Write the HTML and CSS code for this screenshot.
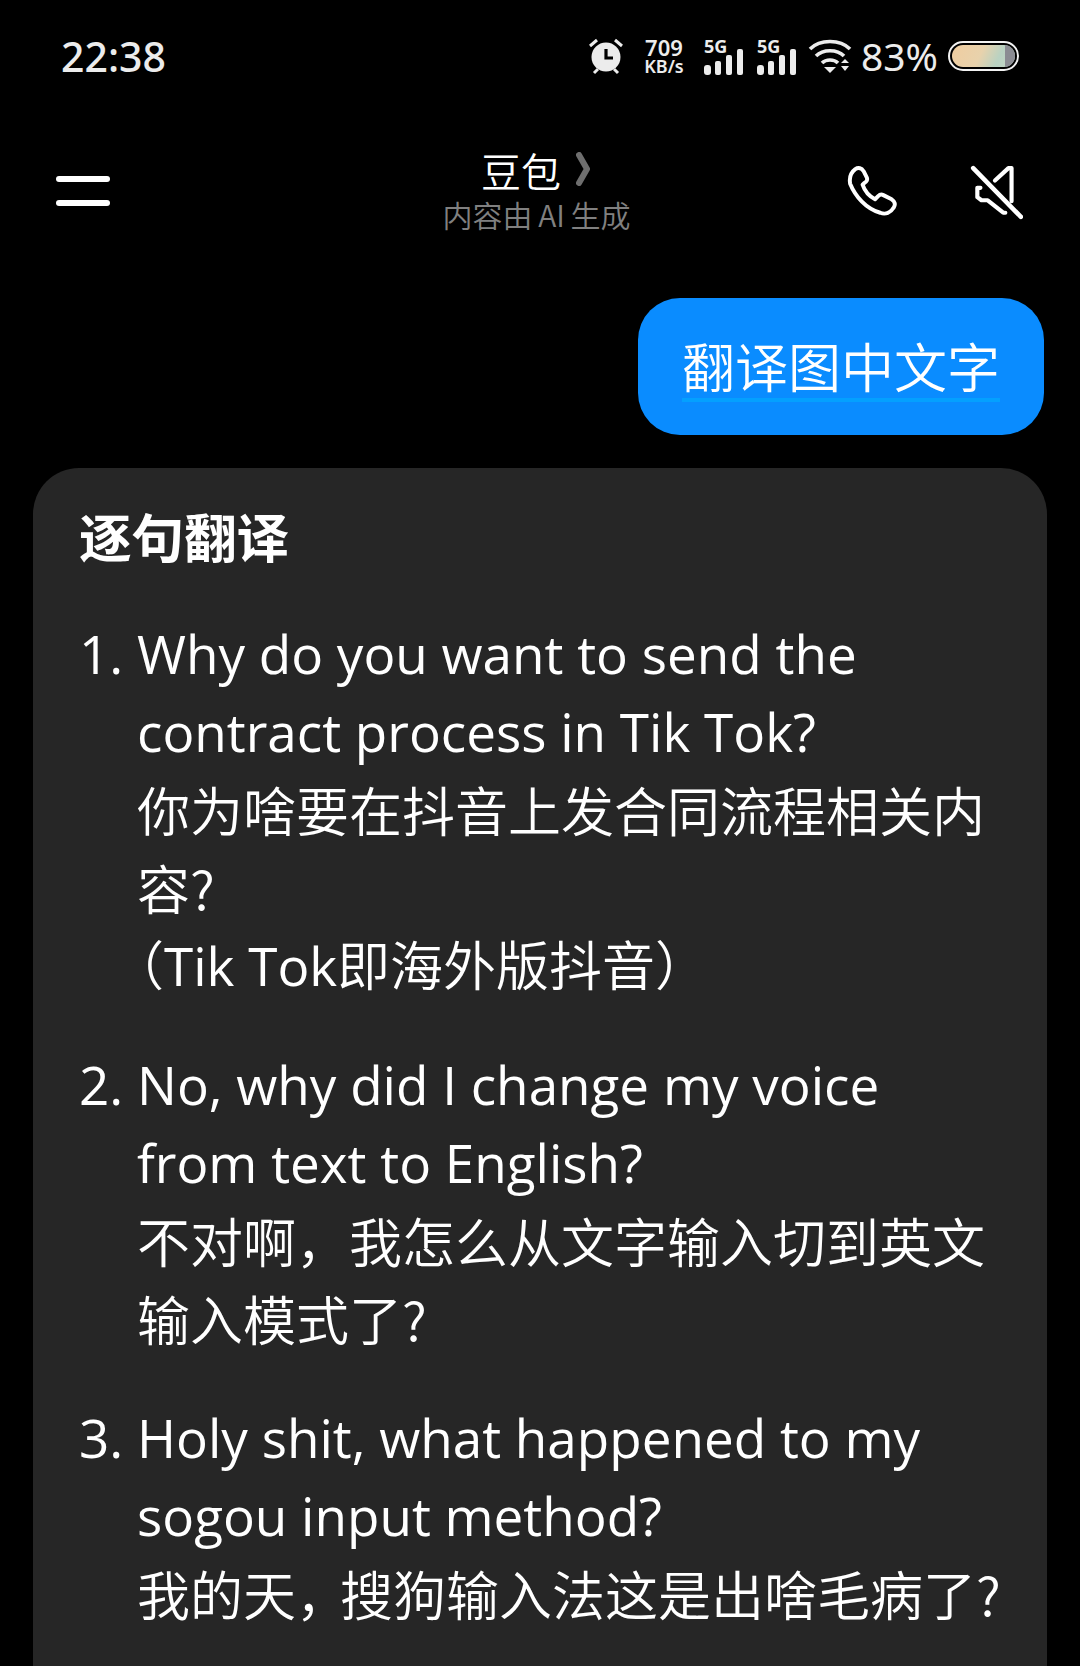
FILE: index.html
```html
<!DOCTYPE html>
<html lang="zh">
<head>
<meta charset="utf-8">
<title>豆包</title>
<link rel="stylesheet" href="styles.css">
</head>
<body>
<div class="screen">
  <div class="status">
    <span class="time">22:38</span>
    <div class="status-right">
      <svg class="alarm" width="36" height="38" viewBox="0 0 36 38"><circle cx="18" cy="20" r="14.5" fill="#ececec"/><path d="M18 12v9h7" fill="none" stroke="#000" stroke-width="3.2"/><path d="M2 9l7-6M34 9l-7-6M6 36l4-4M30 36l-4-4" stroke="#ececec" stroke-width="3" fill="none"/></svg>
      <div class="speed"><span>709</span><span>KB/s</span></div>
      <div class="sim"><span class="sim-label">5G</span><svg class="bars" width="40" height="26" viewBox="0 0 40 26"><rect x="0" y="16" width="7" height="10" rx="3" fill="#ececec"/><rect x="11" y="12" width="6" height="14" rx="2" fill="#ececec"/><rect x="22" y="6" width="6" height="20" rx="2" fill="#ececec"/><rect x="33" y="0" width="6" height="26" rx="2" fill="#ececec"/></svg></div>
      <div class="sim"><span class="sim-label">5G</span><svg class="bars" width="40" height="26" viewBox="0 0 40 26"><rect x="0" y="16" width="7" height="10" rx="3" fill="#ececec"/><rect x="11" y="12" width="6" height="14" rx="2" fill="#ececec"/><rect x="22" y="6" width="6" height="20" rx="2" fill="#ececec"/><rect x="33" y="0" width="6" height="26" rx="2" fill="#ececec"/></svg></div>
      <svg class="wifi" width="44" height="36" viewBox="0 0 44 36"><path d="M2 11C12 1 32 1 42 11M8 18C15 11 29 11 36 18M14 25C18 21 26 21 30 25" fill="none" stroke="#ececec" stroke-width="3.6"/><path d="M16 29h12l-6 6z" fill="#ececec"/><path d="M33 25l4-4 4 4zM33 28h8l-4 5z" fill="#ececec"/></svg>
      <span class="percent">83%</span>
      <div class="battery"><div class="battery-fill"></div></div>
    </div>
  </div>

  <header class="nav">
    <div class="menu"><span></span><span></span></div>
    <div class="title">
      <div class="name">豆包<svg class="chev" width="14" height="34" viewBox="0 0 14 34"><path d="M3 3l8 14-8 14" fill="none" stroke="#6e6e6e" stroke-width="6" stroke-linejoin="round" stroke-linecap="round"/></svg></div>
      <div class="sub">内容由 AI 生成</div>
    </div>
    <div class="actions">
      <svg width="54" height="54" viewBox="0 0 52 52"><path d="M8 4c3-2 6-1 8 2l3 6c1 2 0 4-2 5l-2 2c2 6 6 11 12 14l3-3c1-1 3-2 5-1l8 4c3 2 4 5 2 8-3 5-8 7-13 5C18 42 8 30 3 18 2 12 4 7 8 4z" fill="none" stroke="#fff" stroke-width="3.8" stroke-linejoin="round"/></svg>
      <svg width="54" height="56" viewBox="0 0 52 54"><path d="M4 3l46 47" stroke="#fff" stroke-width="4.4" stroke-linecap="round"/><path d="M25 15L38 3h3v32M11 22H8v9l4 3h6l15 12h2" fill="none" stroke="#fff" stroke-width="4" stroke-linejoin="round" stroke-linecap="round"/></svg>
    </div>
  </header>

  <div class="user-row">
    <div class="bubble"><span class="bubble-text">翻译图中文字</span></div>
  </div>

  <article class="card">
    <h2 class="card-title">逐句翻译</h2>
    <ol class="list">
      <li class="item"><span class="num">1.</span><div class="text"><p>Why do you want to send the contract process in Tik Tok?</p><p class="zh">你为啥要在抖音上发合同流程相关内容?</p><p><span class="zh-in open">（</span>Tik Tok<span class="zh-in">即海外版抖音）</span></p></div></li>
      <li class="item"><span class="num">2.</span><div class="text"><p>No, why did I change my voice<br>from text to English?</p><p class="zh">不对啊，我怎么从文字输入切到英文输入模式了?</p></div></li>
      <li class="item"><span class="num">3.</span><div class="text"><p>Holy shit, what happened to my sogou input method?</p><p class="zh">我的天<span class="comma">，</span>搜狗输入法这是出啥毛病了?</p></div></li>
    </ol>
  </article>
</div>
</body>
</html>
```
FILE: styles.css
```css
* { box-sizing: border-box; margin: 0; padding: 0; }
html, body { background: #000; }
body { width: 1080px; height: 1666px; overflow: hidden; font-family: "Open Sans", "Noto Sans CJK SC", sans-serif; color: #fff; }
.screen { height: 1666px; overflow: hidden; display: flex; flex-direction: column; }

.status { height: 114px; padding: 32px 61px 0 61px; display: flex; justify-content: space-between; align-items: flex-start; }
.time { font-family: "Noto Sans", sans-serif; font-size: 41px; line-height: 48px; color: #ececec; font-weight: 500; }
.status-right { display: flex; align-items: center; height: 48px; }
.alarm { margin-right: 19px; }
.speed { display: flex; flex-direction: column; font-family: "Noto Sans", sans-serif; font-weight: 600; color: #ececec; margin-right: 19px; width: 42px; align-items: center; }
.speed span:first-child { font-size: 22px; line-height: 21px; }
.speed span:last-child { font-size: 18px; line-height: 17px; white-space: nowrap; }
.sim { width: 40px; height: 38px; margin-right: 13px; position: relative; display: flex; align-items: flex-end; }
.sim-label { position: absolute; left: 0; top: -1px; font-family: "Noto Sans", sans-serif; font-weight: 700; font-size: 18px; line-height: 20px; color: #ececec; }
.wifi { margin-right: 9px; margin-left: -2px; }
.percent { font-family: "Noto Sans", sans-serif; font-size: 39px; line-height: 48px; color: #ececec; margin-right: 10px; }
.battery { width: 71px; height: 30px; border: 2px solid #f2f2f2; border-radius: 15px; padding: 2px; }
.battery-fill { height: 100%; border-radius: 11px; background: linear-gradient(115deg, #f0cda0 0%, #e8d2ac 45%, #b9d2c2 72%, #c6d6c6 100%); position: relative; overflow: hidden; }
.battery-fill::after { content: ""; position: absolute; top: 0; right: 0; bottom: 0; width: 10px; background: #8b8c93; }

.nav { height: 184px; padding: 0 57px 0 56px; display: flex; align-items: flex-start; position: relative; }
.menu { width: 54px; margin-top: 62px; display: flex; flex-direction: column; gap: 18px; }
.menu span { display: block; height: 6px; border-radius: 3px; background: #fff; }
.title { position: absolute; left: 0; right: 0; top: 31px; text-align: center; }
.name { font-size: 40px; line-height: 50px; padding-right: 9px; display: flex; justify-content: center; align-items: center; gap: 15px; color: #fff; font-family: "Noto Sans CJK SC", sans-serif; font-weight: 350; }
.chev { margin-top: -2px; }
.sub { font-size: 30px; line-height: 38px; color: #808080; font-family: "Noto Sans CJK SC", sans-serif; font-weight: 350; word-spacing: -1px; padding-right: 7px; }
.actions { margin-left: auto; display: flex; gap: 68px; margin-top: 51px; }

.user-row { display: flex; justify-content: flex-end; padding-right: 36px; margin-bottom: 33px; }
.bubble { width: 406px; height: 137px; border-radius: 42px; background: #0a8cff; display: flex; align-items: center; justify-content: center; }
.bubble-text { font-size: 53px; line-height: 66px; font-family: "Noto Sans CJK SC", sans-serif; font-weight: 350; border-bottom: 4px solid #04a0ff; }

.card { margin-left: 33px; width: 1014px; flex: 1; background: #262626; border-radius: 46px 46px 0 0; padding: 31px 40px 0 46px; }
.card-title { font-size: 52.5px; line-height: 72px; font-weight: 700; font-family: "Noto Sans CJK SC", sans-serif; margin-bottom: 44px; }
.list { list-style: none; display: flex; flex-direction: column; gap: 41px; }
.item { display: flex; font-size: 53px; line-height: 78px; font-weight: 400; }
.num { width: 58px; flex: none; text-align: right; padding-right: 17px; }
.text { flex: 1; }
.zh { font-size: 53px; font-family: "Noto Sans CJK SC", sans-serif; font-weight: 350; margin-top: -1px; margin-bottom: 1px; }
.zh-in { font-size: 53px; font-family: "Noto Sans CJK SC", sans-serif; font-weight: 350; line-height: 0; }
.open { margin-left: -26px; }
.comma { margin-right: -9px; }
```
